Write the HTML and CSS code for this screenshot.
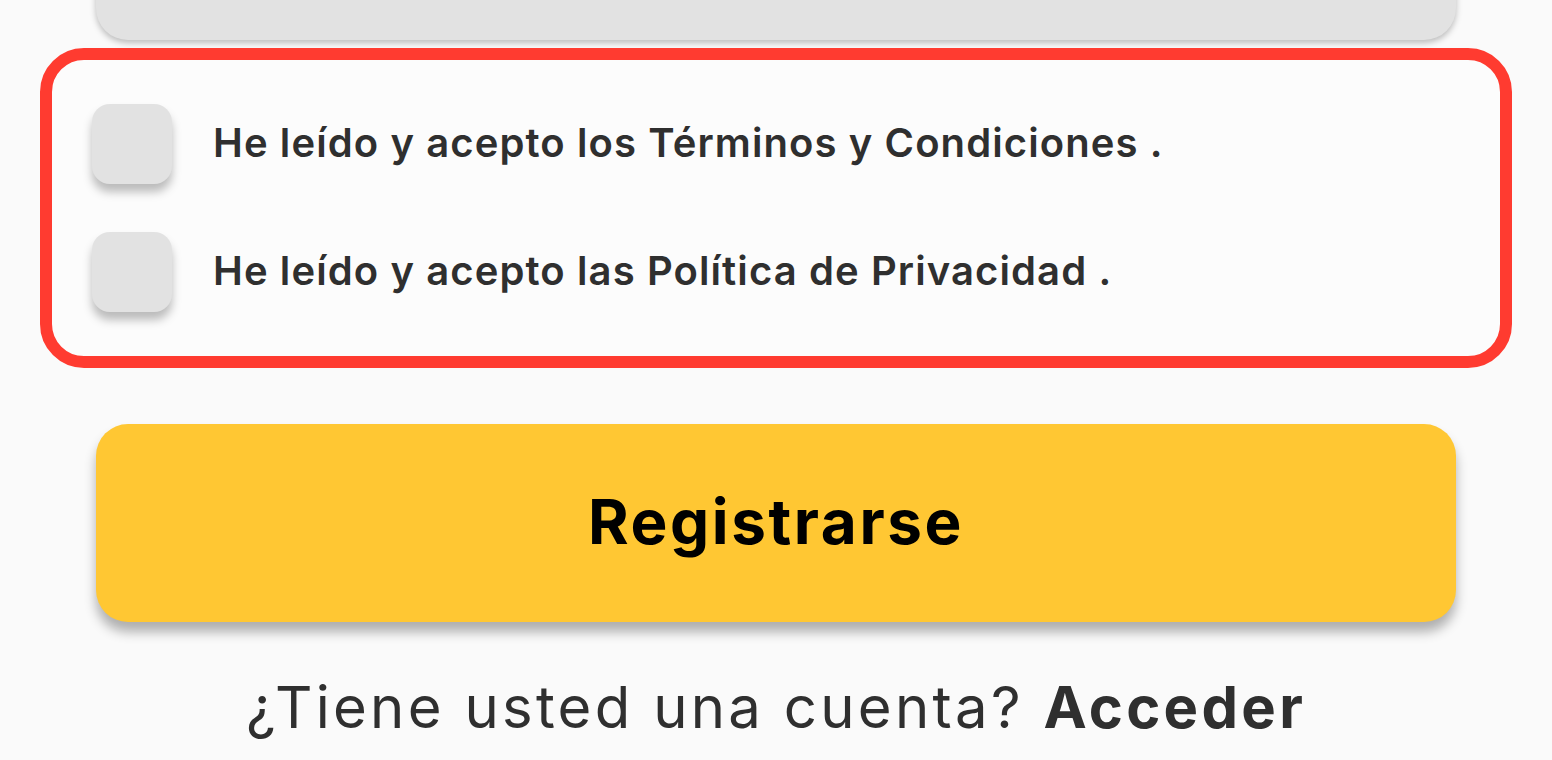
FILE: index.html
```html
<!DOCTYPE html>
<html lang="es">
<head>
<meta charset="utf-8">
<title>Registro</title>
<link rel="stylesheet" href="styles.css">
</head>
<body>
<div class="page">
  <div class="field"></div>
  <div class="terms">
    <label class="row">
      <span class="check"></span>
      <span class="label">He leído y acepto los Términos y Condiciones .</span>
    </label>
    <label class="row">
      <span class="check"></span>
      <span class="label">He leído y acepto las Política de Privacidad .</span>
    </label>
  </div>
  <button class="submit">Registrarse</button>
  <p class="login">¿Tiene usted una cuenta? <strong>Acceder</strong></p>
</div>
</body>
</html>
```

FILE: styles.css
```css
html, body {
  margin: 0;
  padding: 0;
  background: #fafafa;
}
body {
  font-family: "Inter", "DejaVu Sans", sans-serif;
  color: #2f2f2f;
  overflow: hidden;
}
.page {
  width: 1552px;
  height: 760px;
  display: flex;
  flex-direction: column;
}
.field {
  margin: -40px 0 0 96px;
  width: 1360px;
  height: 80px;
  flex: none;
  background: #e2e2e2;
  border-radius: 32px;
  box-shadow: 0 3px 6px rgba(0,0,0,0.25);
}
.terms {
  margin: 8px 0 0 40px;
  width: 1472px;
  height: 320px;
  box-sizing: border-box;
  flex: none;
  border: 12px solid #ff3b30;
  border-radius: 44px;
  padding: 44px 40px;
  display: flex;
  flex-direction: column;
  gap: 48px;
  background: #fcfcfc;
}
.row {
  display: flex;
  align-items: center;
  gap: 41px;
  height: 80px;
}
.check {
  width: 80px;
  height: 80px;
  flex: none;
  background: #e2e2e2;
  border-radius: 18px;
  box-shadow: 0 8px 10px rgba(0,0,0,0.26);
}
.label {
  font-size: 40px;
  font-weight: 600;
  letter-spacing: 1.1px;
  color: #2f2f2f;
  padding-bottom: 4px;
}
.submit {
  margin: 56px 0 0 96px;
  width: 1360px;
  height: 198px;
  flex: none;
  border: none;
  border-radius: 32px;
  background: #ffc733;
  box-shadow: 0 10px 12px rgba(0,0,0,0.3);
  font-family: "Inter", "DejaVu Sans", sans-serif;
  font-size: 62px;
  font-weight: 700;
  letter-spacing: 2.6px;
  color: #000;
  padding: 0 0 4px 0;
}
.login {
  margin: 50px 0 0 0;
  text-align: center;
  font-size: 58px;
  font-weight: 400;
  letter-spacing: 3.3px;
  line-height: 70px;
  color: #2f2f2f;
}
.login strong {
  font-weight: 700;
}
```
